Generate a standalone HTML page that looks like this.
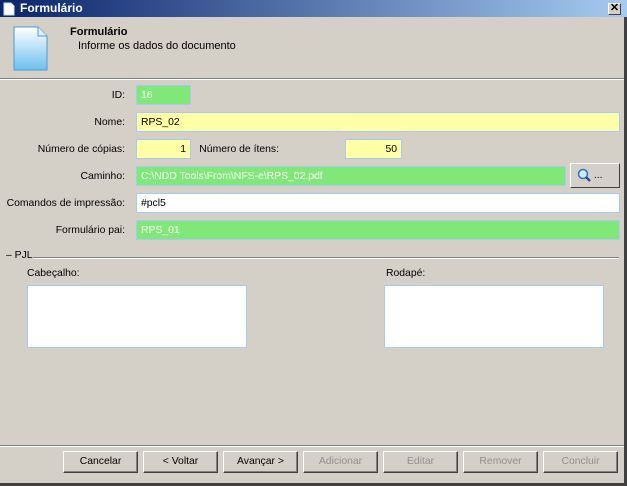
<!DOCTYPE html>
<html><head><style>
*{box-sizing:border-box;margin:0;padding:0}
body{width:627px;height:486px;background:#d4d0c8;font-family:"Liberation Sans",sans-serif;font-size:10.4px;color:#000;position:relative;overflow:hidden}
.a{position:absolute}
.title{left:0;top:0;width:627px;height:17px;background:linear-gradient(90deg,#0a246a,#a6caf0);color:#fff;font-weight:bold;font-size:12px;line-height:17px;padding-left:20px}
.lbl{text-align:right;width:200px;line-height:21px}
.f{height:20px;border:1px solid #a6caf0;line-height:19px;padding-left:4px}
.y{background:#ffffa8}.g{background:#80e878;color:#fff}.w{background:#fff}
.btn{top:451px;width:75px;height:22px;border:1px solid;border-color:#fff #404040 #404040 #fff;box-shadow:inset -1px -1px #808080;text-align:center;line-height:20px}
.dis{color:#909090}
</style></head><body>
<div class="a title">Formulário</div>
<svg class="a" style="left:3px;top:2px" width="12" height="14"><path d="M1 1h7l3 3v9H1z" fill="#fff" stroke="#cde"/></svg>
<div class="a" style="left:608px;top:3px;width:13px;height:12px;background:#d4d0c8;border:1px solid;border-color:#fff #404040 #404040 #fff;font-size:11px;line-height:9px;text-align:center;font-weight:bold">✕</div>
<div class="a" style="left:624px;top:17px;width:3px;height:469px;background:#404040"></div>
<div class="a" style="left:0;top:483px;width:627px;height:3px;background:#404040"></div>
<svg class="a" style="left:13px;top:26px" width="36" height="46"><defs><linearGradient id="d" x1="0" y1="0" x2="0" y2="1"><stop offset="0" stop-color="#fff"/><stop offset="1" stop-color="#6cc0ee"/></linearGradient></defs><path d="M1 1h24l9 9v34H1z" fill="url(#d)" stroke="#4a9ad8"/><path d="M25 1v9h9" fill="#dfeefa" stroke="#4a9ad8"/></svg>
<div class="a" style="left:70px;top:26px;font-weight:bold;font-size:11px">Formulário</div>
<div class="a" style="left:78px;top:40px;font-size:11px">Informe os dados do documento</div>
<div class="a" style="left:0;top:78px;width:624px;height:2px;border-top:1px solid #808080;border-bottom:1px solid #fff"></div>
<div class="a lbl" style="left:-75px;top:85px">ID:</div>
<div class="a f g" style="left:136px;top:85px;width:55px">16</div>
<div class="a lbl" style="left:-75px;top:112px">Nome:</div>
<div class="a f y" style="left:136px;top:112px;width:484px">RPS_02</div>
<div class="a lbl" style="left:-75px;top:139px">Número de cópias:</div>
<div class="a f y" style="left:136px;top:139px;width:55px;text-align:right;padding-right:4px">1</div>
<div class="a lbl" style="left:79px;top:139px">Número de ítens:</div>
<div class="a f y" style="left:345px;top:139px;width:57px;text-align:right;padding-right:4px">50</div>
<div class="a lbl" style="left:-75px;top:166px">Caminho:</div>
<div class="a f g" style="left:136px;top:166px;width:430px">C:\NDD Tools\From\NFS-e\RPS_02.pdf</div>
<div class="a" style="left:570px;top:163px;width:50px;height:25px;border:1px solid;border-color:#fff #404040 #404040 #fff;line-height:23px;padding-left:6px"><svg width="14" height="14" style="vertical-align:middle"><circle cx="6" cy="6" r="4.5" fill="#cfe8ff" stroke="#3070c0" stroke-width="1.5"/><path d="M9 9l4 4" stroke="#2050a0" stroke-width="2.5"/></svg> ...</div>
<div class="a lbl" style="left:-75px;top:193px">Comandos de impressão:</div>
<div class="a f w" style="left:136px;top:193px;width:484px">#pcl5</div>
<div class="a lbl" style="left:-75px;top:220px">Formulário pai:</div>
<div class="a f g" style="left:136px;top:220px;width:484px">RPS_01</div>
<div class="a" style="left:6px;top:250px">– PJL</div>
<div class="a" style="left:33px;top:257px;width:586px;height:2px;border-top:1px solid #808080;border-bottom:1px solid #fff"></div>
<div class="a" style="left:27px;top:268px">Cabeçalho:</div>
<div class="a" style="left:386px;top:268px">Rodapé:</div>
<div class="a w" style="left:27px;top:285px;width:220px;height:63px;border:1px solid #a6caf0"></div>
<div class="a w" style="left:384px;top:285px;width:220px;height:63px;border:1px solid #a6caf0"></div>
<div class="a" style="left:0;top:445px;width:624px;height:2px;border-top:1px solid #808080;border-bottom:1px solid #fff"></div>
<div class="a btn" style="left:63px">Cancelar</div>
<div class="a btn" style="left:143px">&lt; Voltar</div>
<div class="a btn" style="left:223px">Avançar &gt;</div>
<div class="a btn dis" style="left:303px">Adicionar</div>
<div class="a btn dis" style="left:383px">Editar</div>
<div class="a btn dis" style="left:463px">Remover</div>
<div class="a btn dis" style="left:543px">Concluir</div>
</body></html>
